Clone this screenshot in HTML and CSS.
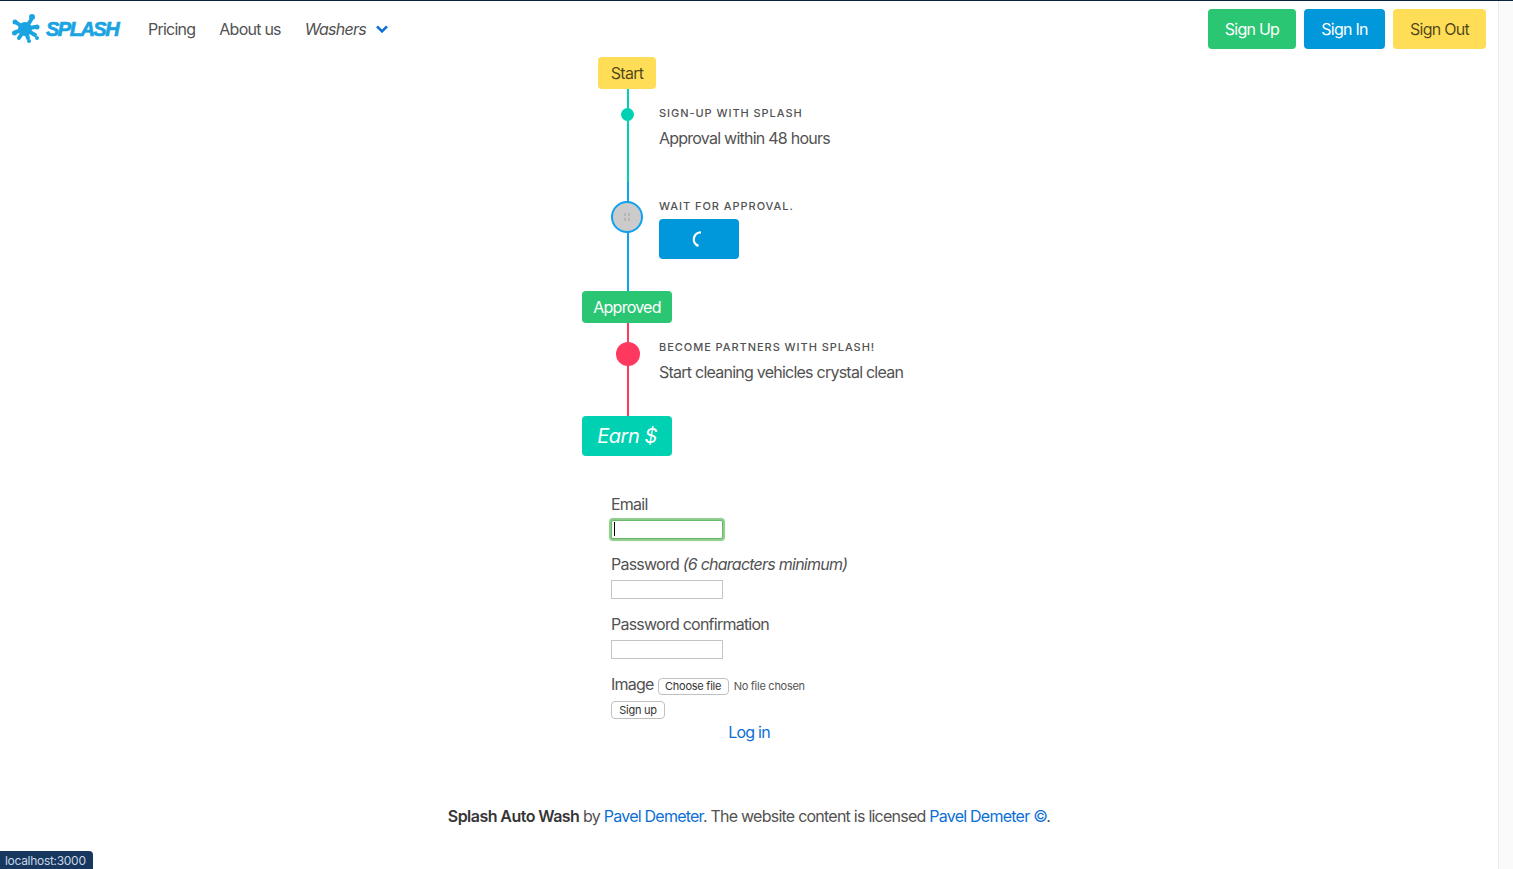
FILE: index.html
```html
<!DOCTYPE html>
<html lang="en">
  <head>
    <meta charset="utf-8">
    <title>Splash Auto Wash</title>
    <link rel="stylesheet" href="styles.css">
  </head>

  <body>
    <div class="page">
      <nav class="navbar">
        <a class="logo" href="#">
          <svg class="logo-splat" width="30" height="30" viewBox="0 0 30 30">
            <g fill="#1ba4e2">
              <circle cx="13" cy="15" r="7"/>
              <circle cx="20" cy="3" r="3"/>
              <circle cx="3" cy="8" r="2.5"/>
              <circle cx="2.5" cy="19" r="2.5"/>
              <circle cx="17" cy="27" r="2"/>
              <circle cx="25" cy="24" r="2"/>
              <circle cx="25" cy="13" r="2.5"/>
            </g>
            <g stroke="#1ba4e2" stroke-width="4" stroke-linecap="round">
              <path d="M13 15L19 6"/>
              <path d="M13 15L5 9"/>
              <path d="M13 15L4 18"/>
              <path d="M13 15L7 24"/>
              <path d="M13 15L16 24"/>
              <path d="M13 15L23 21"/>
              <path d="M13 15L23 13"/>
            </g>
          </svg>
          <span class="logo-text">SPLASH</span>
        </a>
        <a class="nav-link" href="#">Pricing</a>
        <a class="nav-link" href="#">About us</a>
        <a class="nav-link nav-dropdown" href="#">
          <em>Washers</em>
          <svg width="12" height="8" viewBox="0 0 12 8">
            <path d="M1 1.3L6 6.3L11 1.3" fill="none" stroke="#0b6fd6" stroke-width="2.6"/>
          </svg>
        </a>
        <div class="nav-buttons">
          <a class="btn btn-green signup" href="#">Sign Up</a>
          <a class="btn btn-blue signin" href="#">Sign In</a>
          <a class="btn btn-yellow signout" href="#">Sign Out</a>
        </div>
      </nav>

      <main class="content">
        <div class="timeline">
          <div class="tl-header"><span class="tag tag-start btn-yellow">Start</span></div>

          <div class="tl-item line-teal">
            <div class="rail"><span class="marker marker-teal"></span></div>
            <div class="tl-body">
              <p class="heading">Sign-up with Splash</p>
              <p>Approval within 48 hours</p>
            </div>
          </div>

          <div class="tl-item line-blue">
            <div class="rail">
              <span class="marker marker-wait">
                <svg width="6" height="9" viewBox="0 0 6 9">
                  <g fill="#b4b4b4">
                    <rect x="0" y="0" width="2" height="3"/>
                    <rect x="4" y="0" width="2" height="3"/>
                    <rect x="0" y="5" width="2" height="3"/>
                    <rect x="4" y="5" width="2" height="3"/>
                  </g>
                </svg>
              </span>
            </div>
            <div class="tl-body">
              <p class="heading">Wait for approval.</p>
              <a class="btn btn-blue btn-loading" href="#">
                <svg width="16" height="16" viewBox="0 0 16 16">
                  <path d="M10 1.3A7 7 0 0 0 7.5 14.9" fill="none" stroke="#fff" stroke-width="2.3"/>
                </svg>
              </a>
            </div>
          </div>

          <div class="tl-header"><span class="tag btn-green wide">Approved</span></div>

          <div class="tl-item line-red">
            <div class="rail"><span class="marker marker-red"></span></div>
            <div class="tl-body">
              <p class="heading">Become partners with Splash!</p>
              <p>Start cleaning vehicles crystal clean</p>
            </div>
          </div>

          <div class="tl-header"><span class="tag tag-earn wide"><em>Earn $</em></span></div>
        </div>

        <form class="signup-form">
          <div class="field">
            <label for="email">Email</label>
            <div class="focus-wrap">
              <input class="input input-focus" id="email" type="email">
              <span class="caret"></span>
            </div>
          </div>
          <div class="field">
            <label for="pw">Password <em>(6 characters minimum)</em></label>
            <input class="input" id="pw" type="password">
          </div>
          <div class="field">
            <label for="pwc">Password confirmation</label>
            <input class="input" id="pwc" type="password">
          </div>
          <div class="file-row">
            <label>Image</label>
            <button class="form-btn choose" type="button">Choose file</button>
            <span class="no-file">No file chosen</span>
          </div>
          <button class="form-btn signup-btn" type="button">Sign up</button>
        </form>
        <a class="login-link" href="#">Log in</a>

        <footer class="footer">
          <strong>Splash Auto Wash</strong> by <a href="#">Pavel Demeter</a>. The website content is licensed <a href="#">Pavel Demeter &copy;</a>.
        </footer>
      </main>
    </div>
    <div class="scrollbar"></div>
    <div class="status">localhost:3000</div>
  </body>
</html>
```

FILE: styles.css
```css
* {
  box-sizing: border-box;
}

html, body {
  height: 100%;
}

body {
  margin: 0;
  display: flex;
  overflow: hidden;
  border-top: 1px solid #0a2540;
  font-family: "Inter", "Liberation Sans", sans-serif;
  font-size: 16px;
  line-height: 24px;
  letter-spacing: -0.76px;
  color: #525252;
  background: #fff;
}

p {
  margin: 0;
}

a {
  color: #0b6fd6;
  text-decoration: none;
}

.page {
  flex: 1;
  min-width: 0;
}

.scrollbar {
  width: 15px;
  background: #fafafa;
  border-left: 1px solid #ebebeb;
}

/* navbar */
.navbar {
  height: 56px;
  display: flex;
  align-items: center;
  padding: 0 12px;
}

.logo {
  width: 112px;
  margin-right: 24px;
  display: flex;
  align-items: center;
}

.logo-splat {
  flex: none;
}

.logo-text {
  margin-left: 4px;
  font-family: "Liberation Sans", sans-serif;
  font-size: 20px;
  font-weight: 700;
  font-style: italic;
  letter-spacing: -1.5px;
  color: #1ba4e2;
  -webkit-text-stroke: 0.7px #1ba4e2;
}

.nav-link {
  color: #525252;
  margin-right: 24px;
}

.nav-dropdown {
  display: flex;
  align-items: center;
  gap: 10px;
}

.nav-buttons {
  margin-left: auto;
  display: flex;
  gap: 8px;
}

.btn {
  height: 40px;
  display: flex;
  align-items: center;
  justify-content: center;
  border-radius: 4px;
}

.btn-green {
  background: #2ac673;
  color: #fff;
}

.btn-blue {
  background: #0098db;
  color: #fff;
}

.btn-yellow {
  background: #ffdd57;
  color: rgba(0, 0, 0, 0.7);
}

.signup {
  width: 88px;
}

.signin {
  width: 81px;
}

.signout {
  width: 93px;
}

.btn-loading {
  width: 80px;
}

/* timeline */
.content {
  display: flex;
  flex-direction: column;
  align-items: center;
}

.timeline {
  width: 334px;
}

.tl-header {
  width: 90px;
  display: flex;
  justify-content: center;
}

.tag {
  height: 32px;
  border-radius: 4px;
  display: flex;
  align-items: center;
  justify-content: center;
}

.tag-start {
  width: 58px;
}

.tag.wide {
  width: 90px;
}

.tag-earn {
  background: #00d1b2;
  color: #fff;
  font-size: 20px;
  letter-spacing: -0.5px;
  height: 40px;
}

.tl-item {
  display: flex;
  padding-left: 29px;
}

.rail {
  width: 32px;
  flex: none;
  padding-top: 19px;
  background-repeat: no-repeat;
  background-position: 16px 0;
  background-size: 2px 100%;
}

.line-teal .rail {
  background-image: linear-gradient(#00d1b2, #00d1b2);
}

.line-blue .rail {
  background-image: linear-gradient(#0ea1ee, #0ea1ee);
}

.line-red .rail {
  background-image: linear-gradient(#ff3860, #ff3860);
}

.marker {
  display: flex;
  align-items: center;
  justify-content: center;
  border-radius: 50%;
}

.marker-teal {
  width: 13px;
  height: 13px;
  margin-left: 10px;
  background: #00d1b2;
}

.marker-wait {
  width: 32px;
  height: 32px;
  background: #cbcbcb;
  border: 2px solid #0ea1ee;
}

.marker-red {
  width: 24px;
  height: 24px;
  margin-left: 5px;
  background: #ff3860;
}

.tl-body {
  margin-left: 16px;
  padding: 16px 0 32px;
  white-space: nowrap;
}

.heading {
  font-size: 11px;
  font-weight: 500;
  line-height: 16px;
  letter-spacing: 0.95px;
  text-transform: uppercase;
  margin-bottom: 5px;
}

/* form */
.signup-form {
  width: 276px;
  margin-top: 36px;
}

.field {
  height: 60px;
  display: flex;
  flex-direction: column;
  align-items: flex-start;
}

.input {
  width: 112px;
  height: 19px;
  margin-top: 4px;
  padding: 0;
  border: 1px solid #c4c4c4;
  background: #fff;
  outline: none;
}

.focus-wrap {
  position: relative;
  display: flex;
}

.input-focus {
  border-color: #6ab96a;
  box-shadow: 0 0 1px 2px #8ccb8c;
  border-radius: 2px;
}

.caret {
  position: absolute;
  left: 3px;
  top: 6px;
  width: 1px;
  height: 14px;
  background: #000;
}

.file-row {
  display: flex;
  align-items: center;
  height: 24px;
}

.form-btn {
  height: 17px;
  padding: 0;
  font-family: "Inter", "Liberation Sans", sans-serif;
  font-size: 11px;
  letter-spacing: -0.25px;
  line-height: 15px;
  color: #333;
  background: #fff;
  border: 1px solid #c0c0c0;
  border-radius: 4px;
}

.choose {
  width: 71px;
  margin-left: 4px;
  margin-top: 4px;
}

.no-file {
  margin-left: 5px;
  margin-top: 4px;
  font-size: 11px;
  letter-spacing: -0.27px;
  color: #555;
}

.signup-btn {
  display: block;
  width: 54px;
  height: 18px;
  margin-top: 5px;
}

.login-link {
  margin-top: 1px;
}

.footer {
  margin-top: 60px;
  text-align: center;
}

.footer strong {
  font-weight: 600;
  letter-spacing: -0.55px;
  color: #363636;
}

/* browser status pill */
.status {
  position: fixed;
  left: 0;
  bottom: 0;
  width: 93px;
  height: 18px;
  padding-left: 5px;
  font-size: 12px;
  line-height: 20px;
  letter-spacing: -0.3px;
  color: #c9d6e6;
  background: #17375e;
  border-top-right-radius: 4px;
}
```
